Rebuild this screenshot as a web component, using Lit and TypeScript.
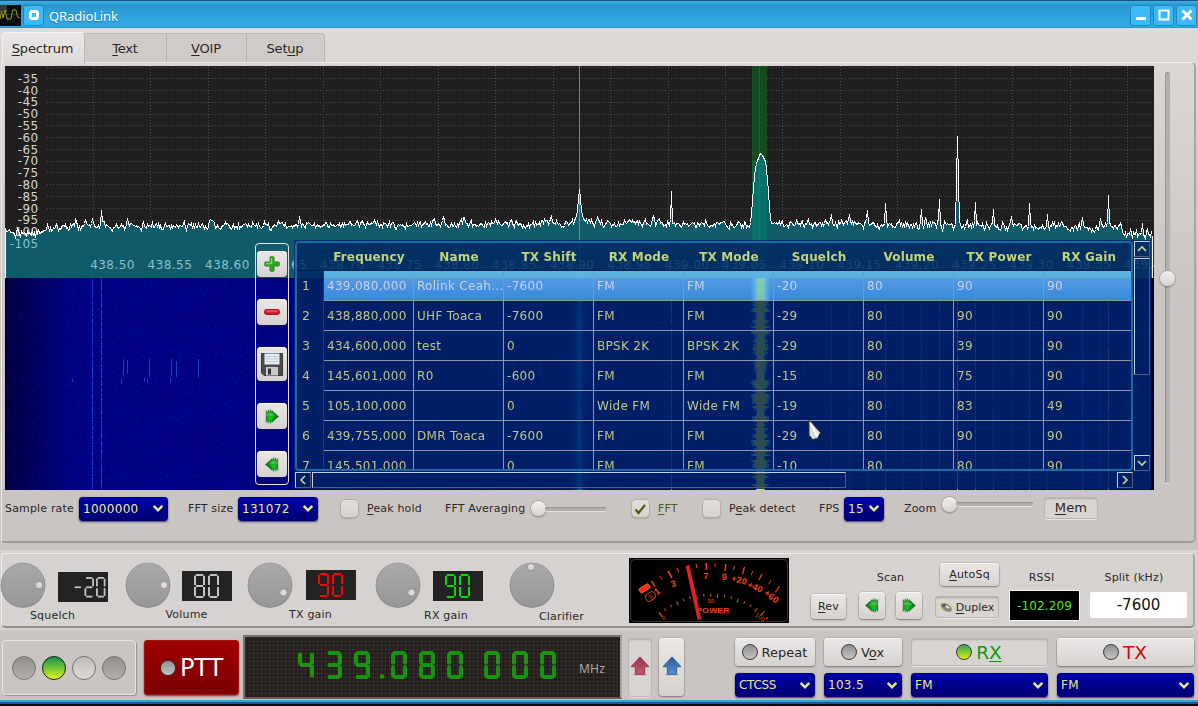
import { LitElement, html, css, svg, nothing } from "lit";
import { customElement, property } from "lit/decorators.js";
import { classMap } from "lit/directives/class-map.js";

/* Deterministic noise source, so that every paint of the plot is the same. */
const makeRandom = (seed: number) => () => {
  seed = (seed * 1664525 + 1013904223) >>> 0;
  return seed / 4294967296;
};

/* ---------- seven segment display ---------- */
const SEGMENTS: Record<string, string> = {
  "0": "abcdef", "1": "bc", "2": "abged", "3": "abgcd", "4": "fgbc", "5": "afgcd",
  "6": "afgedc", "7": "abc", "8": "abcdefg", "9": "abcdfg", "-": "g",
};

@customElement("segment-display")
export class SegmentDisplay extends LitElement {
  @property() value = "";
  @property({ type: Number }) w = 11;
  @property({ type: Number }) h = 24;
  @property({ type: Number }) pitch = 14;
  @property({ type: Number }) thick = 2;
  @property({ type: Number }) gap = 9;
  @property({ type: Boolean }) round = false;

  static styles = css`
    :host { display: block; line-height: 0; }
    svg { display: block; overflow: visible; }
    line { stroke: currentColor; }
    .round line { stroke-linecap: round; }
    circle { fill: currentColor; }
  `;

  render() {
    const { w, h, thick: t } = this;
    const l = t / 2, r = w - t / 2, top = t / 2, m = h / 2, b = h - t / 2;
    const g = this.round ? t * 0.35 : t * 0.4;
    const n = this.round ? t * 0.55 : t * 0.5;
    const map: Record<string, number[]> = {
      a: [l + g, top, r - g, top], b: [r, top + g, r, m - n], c: [r, m + n, r, b - g],
      d: [l + g, b, r - g, b], e: [l, m + n, l, b - g], f: [l, top + g, l, m - n],
      g: [l + g, m, r - g, m],
    };
    let x = 0;
    const parts = [...this.value].map((ch) => {
      const at = x;
      if (ch === "." || ch === " ") {
        x += this.gap;
        return ch === "." ? svg`<circle cx=${at} cy=${h - 2.5} r="2.3"></circle>` : nothing;
      }
      x += this.pitch;
      return [...SEGMENTS[ch]].map((s) => {
        const [x1, y1, x2, y2] = map[s];
        return svg`<line x1=${at + x1} y1=${y1} x2=${at + x2} y2=${y2} stroke-width=${t}></line>`;
      });
    });
    return html`<svg role="img" aria-label=${this.value} width=${x} height=${h} class=${classMap({ round: this.round })}>${parts}</svg>`;
  }
}

/* ---------- combo box ---------- */
@customElement("combo-box")
export class ComboBox extends LitElement {
  @property() value = "";
  static styles = css`
    :host {
      display: flex; box-sizing: border-box; align-items: center; justify-content: space-between;
      height: 24px; padding: 0 3px 0 3px; border-radius: 3px; border: 1px solid #00007c;
      background: linear-gradient(#0000a8, #000074); box-shadow: 0 1px 2px rgba(0, 0, 60, .7);
      color: #e8e88c; font: 12px "DejaVu Sans", sans-serif; letter-spacing: .3px; white-space: nowrap;
    }
    :host([value="CTCSS"]) { letter-spacing: -.3px; }
    svg { display: block; }
  `;
  render() {
    return html`<span>${this.value}</span>
      <svg width="12" height="9" viewBox="0 0 12 9"><path d="M1.700 1.800 6 6.300 10.300 1.800" fill="none" stroke="#e8e88c" stroke-width="2.500"/></svg>`;
  }
}

/* ---------- rotary knob ---------- */
@customElement("dial-knob")
export class DialKnob extends LitElement {
  @property({ type: Number }) dx = 16;
  @property({ type: Number }) dy = 0;
  static styles = css`
    :host { display: block; width: 46px; height: 46px; }
    svg { display: block; }
  `;
  render() {
    return html`<svg width="46" height="46" viewBox="-23 -23 46 46">
      <defs><linearGradient id="k" x1="0" y1="0" x2="0" y2="1"><stop offset="0" stop-color="#a9a9a9"/><stop offset="1" stop-color="#979797"/></linearGradient></defs>
      <circle r="22.3" cy=".4" fill="#7f7c7b"/>
      <circle r="21.8" cy="-.2" fill="url(#k)" stroke="#9c9a99" stroke-width=".7"/>
      <circle cx=${this.dx} cy=${this.dy} r="3.6" fill="#dcd8d5" stroke="#8d8b8a" stroke-width=".7"/>
    </svg>`;
  }
}

/* ---------- spectrum and waterfall ---------- */
const SPIKES: [number, number][] = [
  [75, 219], [85, 219], [92, 219], [101, 210], [127, 218], [210, 219], [299, 216], [443, 216], [464, 217],
  [551, 216], [597, 217], [671, 191], [653, 216], [831, 214], [849, 215], [867, 210], [885, 203], [921, 209],
  [925, 217], [939, 199], [975, 202], [993, 209], [1011, 216], [1029, 203], [1047, 214], [1082, 217],
  [1100, 218], [1108, 195], [1142, 223],
];

/* Outline of the received carrier, as x and y pairs. */
const CARRIER: [number, number][] = [
  [750, 222], [751, 213], [753, 187], [755, 167], [757, 160], [759, 155], [760, 153], [761, 153.5],
  [763, 157], [765, 161], [766, 168], [768, 191], [769, 207], [770, 217], [771, 223],
];
const carrierLevel = (x: number) => {
  const i = CARRIER.findIndex(([cx]) => cx >= x);
  const [x1, y1] = CARRIER[i];
  if (i === 0 || x1 === x) return y1;
  const [x0, y0] = CARRIER[i - 1];
  return y0 + ((y1 - y0) * (x - x0)) / (x1 - x0);
};

const traceLevel = (x: number) => {
  if (x < 32) return 232;
  if (x < 55) return 232 - (x - 32) * 0.26;
  if (x < 400) return 226 - (x - 55) * 0.007;
  if (x < 850) return 223.3;
  if (x < 1118) return 224 + (x - 850) * 0.01;
  return Math.min(234, 227 + (x - 1118) * 0.6);
};

const tracePoints = () => {
  const rnd = makeRandom(77);
  const pts: string[] = [];
  const spikes = new Map(SPIKES);
  let drift = 0;
  for (let x = 5; x <= 1151; x++) {
    drift = drift * 0.35 + (rnd() + rnd() - 1) * (x < 45 || x > 1118 ? 6.5 : 4.9);
    let y = traceLevel(x) + drift;
    if (spikes.has(x)) y = spikes.get(x)!;
    else if (spikes.has(x - 1) || spikes.has(x + 1)) y -= 3;
    if (x === 957) y = 136;
    if (x === 956 || x === 958) y = 180;
    const d = Math.abs(x - 579);
    if (d < 6) y = [189, 198, 210, 215, 218, 220][d];
    if (x >= 750 && x <= 771) y = carrierLevel(x);
    pts.push(`${x + 0.5},${Math.round(y) + 0.5}`);
  }
  return pts;
};

@customElement("spectrum-plot")
export class SpectrumPlot extends LitElement {
  static styles = css`
    :host { display: block; width: 1149px; height: 424px; }
    svg, canvas { display: block; }
    text { font: 12px "DejaVu Sans", sans-serif; fill: #d4d4d4; }
    .freq { fill: #86c2ca; letter-spacing: .45px; }
    .level { letter-spacing: .35px; }
    .under { fill: #86c2ca; }
    .grid { stroke: #4d4b4c; stroke-dasharray: 1 2; }
  `;

  firstUpdated() {
    const canvas = this.renderRoot.querySelector("canvas")!;
    const ctx = canvas.getContext("2d")!;
    const W = 1149, H = 212;
    const img = ctx.createImageData(W, H);
    const rnd = makeRandom(9);
    const gain = new Float32Array(W);
    const set = (x: number, v: number) => { gain[x - 5] = v; };
    [[92, 75], [101, 85], [671, 190], [957, 200], [831, 80], [849, 80], [867, 80], [885, 170], [903, 60], [921, 120],
      [939, 150], [975, 150], [993, 110], [1011, 80], [1029, 160], [1047, 50], [1082, 100], [1100, 60], [1108, 190]]
      .forEach(([x, v]) => set(x, v));
    let spread = 7;
    for (let y = 0; y < H; y++) {
      if (y % 2 === 0) spread = 3.8 + rnd() * 6.2;
      for (let x = 0; x < W; x++) {
        const px = x + 5;
        const edge = Math.min(1, 0.5 + x / 130) * (px > 1150 ? 0.3 : 1);
        let r = 0, g = 0, b = (121 + rnd() * 18) * edge;
        if (rnd() > 0.97) { b += 26; g = 16; }
        const v = gain[x] * (0.6 + rnd() * 0.7);
        if (v > 0 && rnd() > 0.12) { g += v * 0.8; b += v; r += v * 0.25; if (px === 957) { r = 200; g = 210; b = 60; } }
        const near = Math.abs(px - 579);
        if (near < 14) { const k = Math.exp(-near / 3) * (0.6 + rnd() * 0.6); g += 150 * k; b += 120 * k; }
        const s = Math.abs(px - 760);
        if (s < Math.max(3.5, spread - 2.5)) { r = 235; g = 240; b = 20; }
        else if (s < spread) { r = 50; g = 160; b = 220; }
        const i = (y * W + x) * 4;
        img.data[i] = r; img.data[i + 1] = g; img.data[i + 2] = Math.min(255, b); img.data[i + 3] = 255;
      }
    }
    ctx.putImageData(img, 0, 0);
    /* short bursts */
    ctx.fillStyle = "rgba(60,100,225,.6)";
    [[149, 81, 18], [171, 81, 17], [198, 81, 19], [123, 81, 17], [127, 82, 14], [176, 83, 16], [121, 100, 6], [144, 100, 4], [147, 101, 4], [72, 101, 3], [170, 100, 5],
      [344, 82, 12], [491, 81, 12], [513, 83, 8], [540, 81, 18], [1013, 82, 16], [803, 84, 14]]
      .forEach(([x, y, h]) => ctx.fillRect(x - 5, y, 1, h));
  }

  render() {
    const pts = tracePoints();
    const columns = Array.from({ length: 19 }, (_, i) => Math.round(93 + i * 57.45) + 0.5);
    const rows = Array.from({ length: 16 }, (_, i) => Math.floor(67 + i * 11.77) + 0.5);
    return html`
      <svg width="1149" height="212" viewBox="5 66 1149 212">
        <rect x="5" y="66" width="1149" height="212" fill="#201e1f"/>
        ${columns.map((x) => svg`<line class="grid" x1=${x} x2=${x} y1="66" y2="250"></line>`)}
        ${rows.map((y) => svg`<line class="grid" x1="47" x2="1152" y1=${y} y2=${y}></line>`)}
        <rect x="752" y="66" width="15" height="212" fill="#154a20"/>
        <polygon points=${`5.5,278 ${pts.join(" ")} 1152,278`} fill="#0d6577" fill-opacity=".86" shape-rendering="crispEdges"/>
        <rect x="752" y="160" width="15" height="118" fill="#009070" fill-opacity=".35"/>
        <rect x="759" y="66" width="1" height="88" fill="#d01208"/>
        <rect x="759" y="154" width="1" height="124" fill="#4a6068"/>
        ${Array.from({ length: 15 }, (_, i) => svg`<text class=${i === 14 ? "level under" : "level"} x="38.5" y=${82.7 + i * 11.8} text-anchor="end">${-35 - i * 5}</text>`)}
        ${Array.from({ length: 19 }, (_, i) => svg`<text class="freq" x=${112.5 + i * 57.45} y="269" text-anchor="middle">${(438.5 + i * 0.05).toFixed(2)}</text>`)}
        <rect x="579" y="66" width="1" height="212" fill="#0fb2bb"/>
        <polyline points=${pts.join(" ")} fill="none" stroke="#fff" shape-rendering="crispEdges"/>
        <path d="M5.5 228V278M1152.5 236V278" stroke="#fff"/>
      </svg>
      <canvas width="1149" height="212"></canvas>`;
  }
}

/* ---------- memory channel table ---------- */
const COLUMNS = ["Frequency", "Name", "TX Shift", "RX Mode", "TX Mode", "Squelch", "Volume", "TX Power", "RX Gain"];
const CHANNELS = [
  ["439,080,000", "Rolink Ceah...", "-7600", "FM", "FM", "-20", "80", "90", "90"],
  ["438,880,000", "UHF Toaca", "-7600", "FM", "FM", "-29", "80", "90", "90"],
  ["434,600,000", "test", "0", "BPSK 2K", "BPSK 2K", "-29", "80", "39", "90"],
  ["145,601,000", "R0", "-600", "FM", "FM", "-15", "80", "75", "90"],
  ["105,100,000", "", "0", "Wide FM", "Wide FM", "-19", "80", "83", "49"],
  ["439,755,000", "DMR Toaca", "-7600", "FM", "FM", "-29", "80", "90", "90"],
  ["145,501,000", "", "0", "FM", "FM", "-10", "80", "80", "90"],
];

@customElement("memory-table")
export class MemoryTable extends LitElement {
  static styles = css`
    :host {
      display: grid; box-sizing: border-box; grid-template-columns: 838px 16px; grid-template-rows: 230px 16px;
      column-gap: 1px; row-gap: 1px; width: 857px; height: 249px; padding: 1px;
      background: rgba(0, 38, 97, .815); font: 12px "DejaVu Sans", sans-serif; color: #bcc486; white-space: nowrap;
    }
    .frame { box-sizing: border-box; border: 2px solid #1c6ba8; border-radius: 4px; overflow: hidden; height: 230px; }
    .row { display: flex; height: 30px; }
    .head { height: 27px; border-bottom: 1px solid #01204e; font-weight: bold; color: #c3d377; }
    .head span { width: 90px; line-height: 28px; text-align: center; flex: none; letter-spacing: .15px; }
    .head span:first-child, .num { width: 27px; flex: none; margin: 0; }
    .num { line-height: 30px; padding-left: 5px; box-sizing: border-box; border-right: 1px solid #06408a; font-size: 12.5px; }
    .cell {
      flex: none; box-sizing: border-box; width: 90px; height: 30px; line-height: 30px; padding-left: 3px;
      border-right: 1px solid #9493a4; border-bottom: 1px solid #9493a4; letter-spacing: .3px;
    }
    .selected .cell {
      color: #c9d0f0; background: linear-gradient(rgba(110, 205, 245, .86), rgba(105, 200, 240, .86) 22%, rgba(98, 174, 244, .86) 26%, rgba(66, 154, 240, .86));
    }
    .selected .cell:nth-child(6) {
      background:
        linear-gradient(90deg, transparent 66px, rgba(100, 200, 255, .4) 70px, rgba(150, 225, 160, .65) 74px 80px, rgba(100, 200, 255, .4) 83px, transparent 87px) 0 7px no-repeat,
        linear-gradient(rgba(110, 205, 245, .86), rgba(105, 200, 240, .86) 22%, rgba(98, 174, 244, .86) 26%, rgba(66, 154, 240, .86));
    }
    .bar { display: flex; justify-content: space-between; }
    .vert { flex-direction: column; }
    .box {
      box-sizing: border-box; width: 16px; height: 16px; display: grid; place-items: center; flex: none;
      border: 1px solid; border-color: #c5cde0 #5c5a70 #5c5a70 #c5cde0;
    }
    .hthumb { width: 534px; margin-right: auto; margin-left: 1px; }
    .vthumb { height: 117px; margin-bottom: auto; margin-top: 1px; }
    path { fill: none; stroke: #d0d890; stroke-width: 1.6; }
  `;
  render() {
    const arrow = (d: string) => html`<div class="box"><svg width="10" height="10" viewBox="0 0 10 10"><path d=${d}/></svg></div>`;
    return html`
      <div class="frame">
        <div class="row head"><span></span>${COLUMNS.map((c) => html`<span>${c}</span>`)}</div>
        ${CHANNELS.map((cells, i) => html`<div class=${classMap({ row: true, selected: i === 0 })}>
          <div class="num">${i + 1}</div>${cells.map((c) => html`<div class="cell">${c}</div>`)}
        </div>`)}
      </div>
      <div class="bar vert">${arrow("M1 7 5 3 9 7")}<div class="box vthumb"></div>${arrow("M1 3 5 7 9 3")}</div>
      <div class="bar">${arrow("M7 1 3 5 7 9")}<div class="box hthumb"></div>${arrow("M3 1 7 5 3 9")}</div>`;
  }
}

/* ---------- signal meter ---------- */
@customElement("signal-meter")
export class SignalMeter extends LitElement {
  static styles = css`
    :host { display: block; width: 160px; height: 65px; }
    svg { display: block; }
    text { font: bold 9px "Liberation Sans", sans-serif; fill: #f4431c; text-anchor: middle; }
    .small { font-size: 6px; font-weight: normal; fill: #e0500f; }
    .power { font-size: 7px; }
  `;
  render() {
    const marks: [string, number, number, number][] = [
      ["1", 30, 36, -38], ["3", 45.5, 28.5, -20], ["7", 77, 21, 0], ["9", 95, 22, 5],
      ["+20", 109.5, 25, 14], ["+40", 125, 32, 22], ["+60", 140.5, 41, 38],
    ];
    const ticks = [
      [22.5, 23, 26, 28.5, 1.5], [31, 18, 33, 21.5, 1], [39, 13, 43, 20, 1.7], [48, 10, 50, 14, 1.2], [67, 6, 68, 10, 1.2],
      [77, 5, 77.5, 12, 1.5], [86, 5, 86, 9, 1], [97, 6, 96, 13, 1.5], [105.5, 8, 104.5, 12, 1], [115.5, 9, 113.5, 16, 1.4],
      [124, 13, 122, 17, 1], [133, 16, 130, 22, 1.3], [142, 22, 140, 26, 1], [150.5, 28, 146.5, 34, 1.3],
    ];
    const minor = Array.from({ length: 18 }, (_, i) => {
      const a = ((-41 + i * 5.1) * Math.PI) / 180;
      const r0 = 79.5, r1 = i % 3 === 0 ? 75 : 76.6;
      return [82 + Math.sin(a) * r0, 115 - Math.cos(a) * r0, 82 + Math.sin(a) * r1, 115 - Math.cos(a) * r1];
    });
    return html`<svg width="160" height="65">
      <rect width="160" height="65" fill="#000"/>
      <rect x="1.5" y="1.5" width="157" height="62" rx="4" fill="none" stroke="#37383a"/>
      ${ticks.map(([a, b, c, d, w]) => svg`<line x1=${a} y1=${b} x2=${c} y2=${d} stroke="#f03c1a" stroke-width=${w}></line>`)}
      ${minor.map(([a, b, c, d]) => svg`<line x1=${a} y1=${b} x2=${c} y2=${d} stroke="#bc5412" stroke-width="1.1"></line>`)}
      ${marks.map(([t, x, y, r]) => svg`<text transform=${`translate(${x} ${y}) rotate(${r})`}>${t}</text>`)}
      <rect x="-5" y="-2.3" width="11" height="5" rx="1" transform="translate(15 30.5) rotate(-32)" fill="#ff2a1c" stroke="#ff6a10" stroke-width=".8"/>
      <rect x="-5" y="-3.8" width="10" height="7.600" rx="3" transform="translate(21.500 38.500) rotate(-38)" fill="none" stroke="#cf3212"/>
      <text class="small" transform="translate(23 40.5) rotate(-38)">S</text>
      <text class="small" x="82" y="45">50</text>
      <text class="small" transform="translate(36 61.5) rotate(-35)">0</text>
      <text class="small" transform="translate(130 61) rotate(35)">100</text>
      <path d="M30 54 33.5 58.500M135.500 53 132 58" stroke="#d24a12"/>
      <text class="power" x="84" y="55" textLength="33" lengthAdjust="spacingAndGlyphs">POWER</text>
      <path d="M58.500 7.500 70.500 61.500" stroke="#de2222" stroke-width="3.800"/>
    </svg>`;
  }
}

/* ---------- icons ---------- */
const fastForward = (flip = false) => html`<svg width="14" height="15" viewBox="0 0 14 15">
  <defs><linearGradient id="ff" x1="0" y1="0" x2="1" y2="0"><stop offset="0" stop-color="#2c8a30"/><stop offset=".4" stop-color="#14a81c"/><stop offset="1" stop-color="#0a6212"/></linearGradient></defs>
  <g transform=${flip ? "translate(14 0) scale(-1 1)" : "translate(0 0)"}>
    <path d="M1 1.500 3 3.500V.8L5 3V.4L6.500 2.400 7 1.600 13.600 7.500 7 13.400 6.500 12.600 5 14.600V12L3 14.200V11.500L1 13.500Z" fill="url(#ff)" stroke="#2f7a31" stroke-width=".4"/>
    <path d="M1.500 3.500 3 4.500 5 3.500 7 4 11 7.200H1.500Z" fill="#fff" opacity=".22"/>
    <path d="M3 7.500H9L5.500 11.500H3Z" fill="#0ccc18" opacity=".7"/>
  </g></svg>`;
const plusIcon = html`<svg width="16" height="16" viewBox="0 0 16 16">
  <path d="M6 1.200Q6 .8 6.500.8H9.500Q10 .8 10 1.200V6H14.800Q15.200 6 15.200 6.500V9.500Q15.200 10 14.800 10H10V14.800Q10 15.200 9.500 15.200H6.500Q6 15.200 6 14.800V10H1.200Q.8 10 .8 9.500V6.500Q.8 6 1.200 6H6Z" fill="#3aa62c" stroke="#2b8a24"/>
  <path d="M7.500 2V7.500H2.500" fill="none" stroke="#86d070" stroke-width="1.300"/><path d="M6.500 9H14M9 10V14" stroke="#249a1c" stroke-width="1.200"/></svg>`;
const minusIcon = html`<svg width="16" height="6" viewBox="0 0 16 6"><rect x=".5" y=".5" width="15" height="5" rx="2" fill="#d2202c" stroke="#a81420"/><path d="M2.500 2H13.500" stroke="#f07a80"/></svg>`;
const floppyIcon = html`<svg width="22" height="23" viewBox="0 0 22 23">
  <path d="M.5.5H21.500V22.500H3L.5 20Z" fill="#4b4b4d" stroke="#38383a"/>
  <rect x="3.500" y=".5" width="15" height="11" fill="#e4edf5"/><path d="M5 3.500H17M5 6H17M5 8.500H17" stroke="#bccbd8"/>
  <rect x="5" y="14" width="12" height="8.500" fill="#c9c9c9"/><rect x="7" y="15.500" width="3" height="6" fill="#333"/></svg>`;
const arrowIcon = (id: string, a: string, b: string) => html`<svg class="arrow" width="20" height="20" viewBox="0 0 20 20">
  <defs><linearGradient id=${id} x1="0" y1="0" x2="0" y2="1"><stop offset="0" stop-color=${a}/><stop offset="1" stop-color=${b}/></linearGradient></defs>
  <path d="M3 18.800H17" stroke="#8a8684" opacity=".6"/>
  <path d="M10 .9 19 10.800H14.700V18.300H5.300V10.800H1Z" fill="url(#${id})" stroke=${a} stroke-width=".9"/></svg>`;
const mouseIcon = html`<svg width="13" height="11" viewBox="0 0 13 11">
  <ellipse cx="6.300" cy="5.500" rx="6" ry="3.500" transform="rotate(32 6.300 5.500)" fill="#87868c" stroke="#c9b03a" stroke-width=".9"/>
  <path d="M1.500 2.200 5 1.800 7 4 3 5.200Z" fill="#5d5c60"/><path d="M5.500 4 9 6" stroke="#e8e8ee" stroke-width="1.500"/></svg>`;

/* ---------- application ---------- */
@customElement("app-root")
export class AppRoot extends LitElement {
  static styles = css`
    :host {
      display: flex; flex-direction: column; width: 1198px; height: 706px; overflow: hidden; position: relative;
      background: linear-gradient(#dedad8 28px, #d9d5d3 90px, #cac5c2 300px);
      font: 11px "DejaVu Sans", sans-serif; color: #2a2828; white-space: nowrap;
    }
    svg { display: block; }
    u { text-underline-offset: 2px; text-decoration-thickness: 1px; }

    .titlebar {
      display: flex; align-items: center; height: 28px; box-sizing: border-box; flex: none; padding: 3px 0 0;
      border-top: 1px solid #14587e; border-bottom: 1px solid #2391cb;
      background: linear-gradient(#3bb0e4, #2a97cd 15%, #30a8e4 80%); color: #fff;
    }
    .title { font: 13px "Noto Sans", sans-serif; margin: 1px auto 0 5px; text-shadow: 0 1px 1px #1b6d9b; letter-spacing: -.1px; }
    .tbtn {
      width: 21px; height: 21px; box-sizing: border-box; margin-right: 2px; border-radius: 3px; border: 1px solid #2386bb;
      background: #3db9f5; display: grid; place-items: center; margin-top: -1px;
    }
    .tbtn:last-child { margin-right: 1px; }
    .tbtn.menu { margin: -1px 0 0 2px; }

    .tabs { display: flex; height: 35px; padding: 4px 0 0 2px; box-sizing: border-box; flex: none; font-size: 13px; letter-spacing: -.2px; }
    .tab {
      box-sizing: border-box; height: 30px; margin-top: 1px; line-height: 30px; text-align: center; padding-right: 1px;
      background: #d0cbc7; border-right: 1px solid #b8b3af; border-top: 1px solid #c0bbb7;
    }
    .tab.on { height: 32px; margin-top: 0; line-height: 32px; padding-right: 2px; background: linear-gradient(#e9e7e6, #dedad8); border: 1px solid #f4f3f2; border-right-color: #bbb6b3; border-bottom: 0; border-radius: 4px 4px 0 0; z-index: 1; }
    .tab:last-child { border-radius: 0 4px 0 0; }

    .page {
      display: flex; flex-direction: column; height: 481px; box-sizing: border-box; flex: none; margin: -1px 2px 0 1px; padding: 3px 0 0 3px;
      border: 1px solid #f0eeec; border-right: 2px solid #aaa5a2; border-bottom: 2px solid #9f9b98; border-left-color: #edebe9;
      border-radius: 0 5px 5px 4px;
    }
    .upper { display: flex; }
    .plot { position: relative; width: 1149px; height: 424px; flex: none; }
    .vslider { position: relative; width: 27px; flex: none; display: flex; justify-content: center; padding-top: 6px; height: 412px; }
    .vgroove { width: 5px; height: 412px; border-radius: 3px; background: #b5b0ad; box-shadow: inset 1px 1px 1px #98938f; box-sizing: border-box; border-bottom: 1px solid #e8e5e3; }
    .handle {
      width: 15px; height: 15px; border-radius: 50%; background: linear-gradient(#f3f2f1, #d5d2d0);
      box-shadow: 0 0 0 .8px #a7a29f, 0 1px 2px rgba(0, 0, 0, .45);
    }
    .vslider .handle { position: absolute; left: 6px; top: 205px; }
    .memtools {
      position: absolute; left: 250px; top: 177px; width: 34px; height: 242px; box-sizing: border-box; padding: 7px 1px 0;
      border: 1px solid #e4e4ee; border-radius: 4px; display: flex; flex-direction: column; gap: 22px;
    }
    memory-table { position: absolute; left: 289px; top: 174px; }
    .cursor { position: absolute; left: 803px; top: 353px; }

    .btn {
      display: flex; align-items: center; justify-content: center; box-sizing: border-box; border-radius: 4px;
      background: linear-gradient(#eae8e7, #d5d1ce); box-shadow: 0 0 0 .5px rgba(120, 112, 108, .35), 0 1px 2px rgba(0, 0, 0, .4), inset 0 1px 0 #f7f6f5;
    }
    .btn.down { background: #d8d4d1; box-shadow: inset 0 0 0 1px #bab5b2, inset 0 2px 2px #b0aba8, 0 1px 0 #e8e5e3; }
    .tool { width: 30px; height: 26px; flex: none; }
    .tool.big { height: 34px; }
    .arrow { margin-top: -3px; }

    .controls { display: flex; align-items: center; height: 37px; letter-spacing: .17px; }
    .controls > * { flex: none; }
    .check {
      width: 17px; height: 17px; box-sizing: border-box; border-radius: 4px; background: linear-gradient(#e2dfdd, #d5d1ce);
      box-shadow: 0 0 0 1px #b4afac, 0 1px 2px rgba(0, 0, 0, .4); display: grid; place-items: center;
    }
    .hslider { display: flex; align-items: center; }
    .hgroove { height: 4px; border-radius: 2px; background: #b5b0ad; box-shadow: inset 0 1px 1px #98938f, 0 1px 0 #e4e1df; margin-left: -1px; }
    .olive { color: #5c5c10; }

    .dials {
      flex: none; height: 80px; margin-top: 7px; background: #d6d2cf; padding: 3px 2px 2px 1px; box-sizing: border-box; display: flex;
    }
    .dialbox {
      display: flex; box-sizing: border-box; height: 75px; width: 1194px; border: 1px solid #efedeb;
      border-right: 2px solid #aaa5a2; border-bottom: 2px solid #8f8b88; border-radius: 5px; letter-spacing: .2px;
    }
    .unit { box-sizing: border-box; flex: none; }
    .pair { display: flex; align-items: flex-start; }
    .lcd { width: 50px; height: 30px; box-sizing: border-box; background: #232323; color: #c2c2c2; flex: none; }
    .cap { display: block; text-align: center; line-height: 14px; }
    .stack { display: flex; flex-direction: column; align-items: center; flex: none; }
    .rowx { display: flex; gap: 11px; }
    .rssi { box-sizing: border-box; width: 71px; height: 31px; background: #000; border: 1px solid #f6f5f4; color: #55e810; font-size: 12px; line-height: 30px; text-align: center; letter-spacing: .1px; }
    .split { width: 97px; height: 26px; background: #fff; color: #111; font-size: 15px; line-height: 26px; text-align: center; letter-spacing: 0; border-radius: 2px; }

    .bottom { display: flex; flex: none; height: 70px; padding: 5px 0 0 2px; box-sizing: border-box; align-items: flex-start; }
    .bottom > * { flex: none; }
    .leds { display: flex; gap: 6px; align-items: center; box-sizing: border-box; width: 134px; height: 55px; margin-top: 5px; padding-left: 9px; border: 1px solid #e9e6e4; border-radius: 4px; box-shadow: 1px 1px 1px #96918e; }
    .led { width: 24px; height: 24px; box-sizing: border-box; border-radius: 50%; border: 1.500px solid #75726f; background: linear-gradient(#938f8c, #b3afac); }
    .led.lit { border-color: #0e2c12; background: linear-gradient(#1f8f52, #77c832 55%, #f0f020); }
    .led.pale { background: linear-gradient(#c0bbb8, #dedad8); }
    .ptt { display: flex; align-items: center; justify-content: center; gap: 4px; width: 95px; height: 55px; margin: 5px 0 0 8px; box-sizing: border-box; border-radius: 4px; background: linear-gradient(#9e0000, #7c0000); box-shadow: inset 0 0 0 1px #a61212, 0 1px 2px rgba(60, 0, 0, .7); color: #fff; font-size: 24px; letter-spacing: -.1px; }
    .dot { width: 16px; height: 16px; box-sizing: border-box; border-radius: 50%; border: 1.500px solid #3c3b3b; background: linear-gradient(#8f8f8f, #c4c4c4); }
    .dot.lit { background: linear-gradient(#35a35a, #8ccc30 55%, #e6ec20); }
    .vfo {
      display: flex; box-sizing: border-box; width: 379px; height: 64px; margin-left: 4px; padding: 14px 0 0 53px; color: #1a9312;
      border: 2px solid #77736f; border-right-color: #aaa5a1; border-bottom-color: #5f5b57;
      background: repeating-linear-gradient(90deg, rgba(90, 82, 76, .25) 0 1px, transparent 1px 4px), repeating-linear-gradient(rgba(90, 82, 76, .25) 0 1px, transparent 1px 4px), #231d1c;
    }
    .mhz { font: 12px "Noto Sans", sans-serif; color: #a9a5a2; margin: 9px 0 0 11px; letter-spacing: .2px; }
    .col { display: flex; flex-direction: column; gap: 7px; margin: 3px 0 0 9px; }
    .col .btn { height: 28px; font-size: 13px; gap: 4px; letter-spacing: 0; padding-right: 1px; }
    .big .btn { font-size: 18.500px; gap: 4px; }
    .edge { flex: none; height: 6px; background: linear-gradient(#2ba6e0 0 2px, #14608c 2px 4px, #03080c 4px); }
    .green { color: #0a9a0a; }
    .red { color: #cc0a0a; }
  `;

  private groove(width: number) {
    return html`<div class="hslider"><div class="handle"></div><div class="hgroove" style="width:${width}px"></div></div>`;
  }

  render() {
    return html`
      <div class="titlebar">
        <svg width="21" height="21" viewBox="0 0 21 21"><rect width="21" height="21" fill="#070a0a"/><rect width="7" height="7" fill="#5c5f58" opacity=".6"/><path d="M3 4V14M8 3V18M14 3V18M0 9.500H21" stroke="#26403a" stroke-width=".7"/><path d="M0 14 1.500 6 3 13 5 5 7 14H11L12.500 5H16L17.500 12 20 13" fill="none" stroke="#a09a22"/></svg>
        <div class="tbtn menu"><svg width="12" height="12" viewBox="0 0 12 12"><path d="M3 1H9L11 3V9L9 11H3L1 9V3ZM4 4V8H8V4Z" fill="#fff" fill-rule="evenodd"/></svg></div>
        <div class="title">QRadioLink</div>
        <div class="tbtn"><svg width="12" height="12" viewBox="0 0 12 12"><path d="M1 9.500H11" stroke="#fff" stroke-width="3"/></svg></div>
        <div class="tbtn"><svg width="12" height="12" viewBox="0 0 12 12"><path d="M1.500 1.500H10.500V10.500H1.500Z" fill="none" stroke="#fff" stroke-width="2"/></svg></div>
        <div class="tbtn"><svg width="12" height="12" viewBox="0 0 12 12"><path d="M1.500 1.500 10.500 10.500M10.500 1.500 1.500 10.500" stroke="#fff" stroke-width="2.800"/></svg></div>
      </div>

      <div class="tabs">
        <div class="tab on" style="width:83px"><u>S</u>pectrum</div>
        <div class="tab" style="width:82px"><u>T</u>ext</div>
        <div class="tab" style="width:80px"><u>V</u>OIP</div>
        <div class="tab" style="width:78px">Set<u>u</u>p</div>
      </div>

      <div class="page">
        <div class="upper">
          <div class="plot">
            <spectrum-plot></spectrum-plot>
            <div class="memtools">
              <div class="btn tool">${plusIcon}</div>
              <div class="btn tool">${minusIcon}</div>
              <div class="btn tool big">${floppyIcon}</div>
              <div class="btn tool">${fastForward()}</div>
              <div class="btn tool">${fastForward(true)}</div>
            </div>
            <memory-table></memory-table>
            <svg class="cursor" width="14" height="23" viewBox="0 0 14 23"><path d="M1 1 12.500 13.500 9.500 19.500 4.500 20.500 1 16Z" fill="#dcdcd8" stroke="#33332f"/><path d="M2.500 4 9 17" stroke="#fff" stroke-width="2"/></svg>
          </div>
          <div class="vslider"><div class="vgroove"></div><div class="handle"></div></div>
        </div>
        <div class="controls">
          <span style="width:74px">Sample rate</span>
          <combo-box style="width:89px" value="1000000"></combo-box>
          <span style="width:50px;margin-left:20px">FFT size</span>
          <combo-box style="width:80px" value="131072"></combo-box>
          <div class="check" style="margin:0 9px 0 23px"></div><span style="width:78px"><u>P</u>eak hold</span>
          <span style="width:86px">FFT Averaging</span>
          ${this.groove(61)}
          <div class="check" style="margin:0 9px 0 26px"><svg width="13" height="12" viewBox="0 0 13 12"><path d="M1.500 6.500 4.500 10 11 2" fill="none" stroke="#55550c" stroke-width="2.200"/></svg></div>
          <span class="olive" style="width:45px"><u>F</u>FT</span>
          <div class="check" style="margin-right:9px"></div><span style="width:90px">P<u>e</u>ak detect</span>
          <span style="width:25px">FPS</span>
          <combo-box style="width:40px" value="15"></combo-box>
          <span style="width:38px;margin-left:20px">Zoom</span>
          <div style="margin-bottom:9px">${this.groove(77)}</div>
          <div class="btn down" style="width:54px;height:22px;margin:0 0 2px 11px;font-size:13px"><span><u>M</u>em</span></div>
        </div>
      </div>

      <div class="dials"><div class="dialbox">
        <div class="unit" style="width:124px;padding-top:8px;margin-left:-2px">
          <div class="pair"><dial-knob></dial-knob><div class="lcd" style="margin:10px 0 0 12px;padding:5px 0 0 15px"><segment-display value="-20" w="9.500" h="20.500" pitch="11.500" thick="1.800"></segment-display></div></div>
          <span class="cap" style="width:105px;margin-top:1px">Squelch</span>
        </div>
        <div class="unit" style="width:122px;padding-top:8px;margin-left:1px">
          <div class="pair"><dial-knob></dial-knob><div class="lcd" style="margin:9px 0 0 11px;padding:3px 0 0 12px"><segment-display value="80"></segment-display></div></div>
          <span class="cap" style="width:123px">Volume</span>
        </div>
        <div class="unit" style="width:128px;padding-top:8px">
          <div class="pair"><dial-knob dx="13.500" dy="7.500"></dial-knob><div class="lcd" style="margin:8px 0 0 13px;padding:3px 0 0 12px;color:#f80404"><segment-display value="90"></segment-display></div></div>
          <span class="cap" style="width:127px">TX gain</span>
        </div>
        <div class="unit" style="width:134px;padding-top:8px">
          <div class="pair"><dial-knob dx="13.500" dy="7.500"></dial-knob><div class="lcd" style="margin:9px 0 0 12px;padding:3px 0 0 12px;color:#08d808"><segment-display value="90"></segment-display></div></div>
          <span class="cap" style="width:142px;margin-top:1px">RX gain</span>
        </div>
        <div class="unit" style="width:120px;padding-top:8px">
          <dial-knob dx="-1" dy="-18"></dial-knob>
          <span class="cap" style="width:105px;margin-top:2px">Clarifier</span>
        </div>
        <signal-meter style="flex:none;margin:4px 0 0 0"></signal-meter>
        <div class="btn" style="flex:none;width:35px;height:25px;margin:40px 0 0 22px"><span><u>R</u>ev</span></div>
        <div class="stack" style="width:63px;margin:17px 0 0 13px">
          <span class="cap">Scan</span>
          <div class="rowx" style="margin-top:7px"><div class="btn" style="width:26px;height:27px">${fastForward(true)}</div><div class="btn" style="width:26px;height:27px">${fastForward()}</div></div>
        </div>
        <div class="stack" style="align-items:flex-end;width:65px;margin:9px 0 0 12px">
          <div class="btn" style="width:59px;height:23px"><span><u>A</u>utoSq</span></div>
          <div class="btn down" style="width:64px;height:22px;margin-top:10px;gap:3px;letter-spacing:0"><span>${mouseIcon}</span><span><u>D</u>uplex</span></div>
        </div>
        <div class="stack" style="width:71px;margin:17px 0 0 10px"><span class="cap" style="margin-left:-6px">RSSI</span><div class="rssi" style="margin-top:5px">-102.209</div></div>
        <div class="stack" style="width:97px;margin:17px 0 0 10px"><span class="cap" style="margin-left:-9px">Split (kHz)</span><div class="split" style="margin-top:7px">-7600</div></div>
      </div></div>

      <div class="bottom">
        <div class="leds"><div class="led"></div><div class="led lit"></div><div class="led pale"></div><div class="led"></div></div>
        <div class="ptt"><div class="dot"></div>PTT</div>
        <div class="vfo"><segment-display value="439.080 000" w="16" h="28" pitch="28" thick="4.100" gap="9" round></segment-display><span class="mhz">MHz</span></div>
        <div class="btn down" style="width:24px;height:59px;margin:3px 0 0 6px">${arrowIcon("ar", "#9c2f48", "#c25a72")}</div>
        <div class="btn" style="width:25px;height:58px;margin:3px 0 0 7px">${arrowIcon("ab", "#2c5c9c", "#5a8cc4")}</div>
        <div class="col" style="width:80px;margin-left:51px"><div class="btn"><div class="dot"></div>Repeat</div><combo-box value="CTCSS"></combo-box></div>
        <div class="col" style="width:78px"><div class="btn"><div class="dot"></div><span>V<u>o</u>x</span></div><combo-box value="103.5"></combo-box></div>
        <div class="col big" style="width:137px"><div class="btn down"><div class="dot lit"></div><span class="green">R<u>X</u></span></div><combo-box value="FM"></combo-box></div>
        <div class="col big" style="width:137px"><div class="btn"><div class="dot"></div><span class="red">TX</span></div><combo-box value="FM"></combo-box></div>
      </div>
      <div class="edge"></div>
    `;
  }
}
